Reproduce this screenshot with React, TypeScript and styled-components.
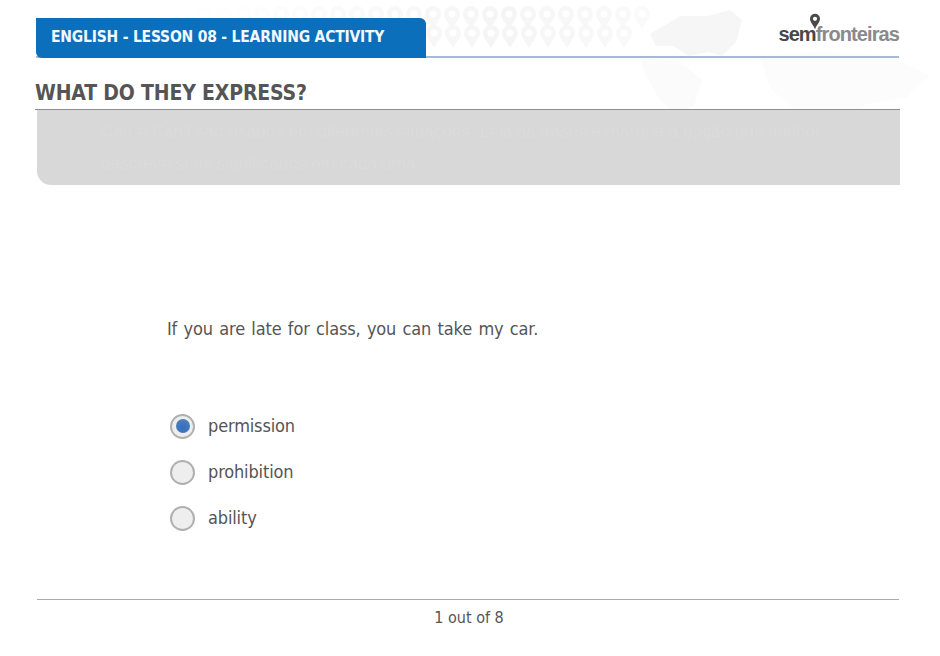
import React from 'react';
import styled, { createGlobalStyle } from 'styled-components';

const OPTIONS = [
  { id: 1, label: 'permission', checked: true },
  { id: 2, label: 'prohibition', checked: false },
  { id: 3, label: 'ability', checked: false },
];

const PIN_ROWS = [
  { y: 6, from: 205, count: 24 },
  { y: 25, from: 434, count: 11 },
];

const App = (): React.JSX.Element => {
  return (
    <Page>
      <GlobalStyle />
      <WorldMap viewBox="0 0 940 320" aria-hidden="true">
        {PIN_ROWS.map((row) =>
          Array.from({ length: row.count }).map((_, i) => {
            const x = row.from + i * 19;
            const fade = Math.max(0.1, 1 - Math.abs(x - 500) / 300);
            return (
              <path
                key={`${row.y}-${i}`}
                transform={`translate(${x} ${row.y})`}
                d="M0 0a8 8 0 0 0-8 8c0 4 4 8 8 15 4-7 8-11 8-15a8 8 0 0 0-8-8zm0 4.5a3.5 3.5 0 1 1 0 7 3.5 3.5 0 0 1 0-7z"
                fill="#f5f5f5"
                fillRule="evenodd"
                opacity={fade}
              />
            );
          }),
        )}
        <path d="M650 34l30-18 28 0 22-6 12 10-6 22-14 14-14-4-20 4-14-10-18 0z" fill="#f6f6f6" />
        <path d="M640 58l40 4 22 18-8 26-18 8-16-14-14-24z" fill="#fbfbfb" />
        <path d="M760 56l60-4 70 4 40 20-24 22-40 6-24 24-42-12-30-28z" fill="#fcfcfc" />
      </WorldMap>

      <Header>
        <LessonTab>ENGLISH - LESSON 08 - LEARNING ACTIVITY</LessonTab>
        <Logo>
          <LogoPin viewBox="0 0 12 17" aria-hidden="true">
            <path
              d="M6 .8a5 5 0 0 0-5 5c0 3.2 3.4 6.6 5 10.4 1.6-3.8 5-7.2 5-10.4a5 5 0 0 0-5-5z"
              fill="#4a4a4a"
            />
            <circle cx="6" cy="5.8" r="2.1" fill="#fff" />
          </LogoPin>
          <LogoStrong>sem</LogoStrong>
          <LogoLight>fronteiras</LogoLight>
        </Logo>
      </Header>

      <Title>WHAT DO THEY EXPRESS?</Title>

      <Instructions>
        <InstructionText>
          Can e Can't são usados em diferentes situações. Leia as frases e marque a opção que melhor
          descreve seus significados em cada uma.
        </InstructionText>
      </Instructions>

      <Question>If you are late for class, you can take my car.</Question>

      <OptionList>
        {OPTIONS.map((option) => (
          <OptionRow key={option.id}>
            <Radio>{option.checked && <RadioDot />}</Radio>
            <OptionLabel>{option.label}</OptionLabel>
          </OptionRow>
        ))}
      </OptionList>

      <Footer>1 out of 8</Footer>
    </Page>
  );
};

const FONT = `Tahoma, "DejaVu Sans Condensed", "DejaVu Sans", sans-serif`;

const GlobalStyle = createGlobalStyle`
  html, body {
    margin: 0;
    padding: 0;
    background: #fff;
  }
`;

const Page = styled.div`
  position: relative;
  width: 940px;
  height: 656px;
  overflow: hidden;
  background: #fff;
  font-family: ${FONT};
  color: #555;
  display: flex;
  flex-direction: column;
`;

const WorldMap = styled.svg`
  position: absolute;
  left: 0;
  top: 0;
  width: 940px;
  height: 320px;
`;

const Header = styled.header`
  position: relative;
  width: 863px;
  height: 40px;
  margin: 18px 0 0 36px;
  display: flex;
  justify-content: space-between;
  align-items: flex-start;
  background: linear-gradient(#a7bad4, #a7bad4) left 38px / 100% 2px no-repeat;
`;

const LessonTab = styled.div`
  width: 375px;
  height: 40px;
  padding-left: 15px;
  background: #0b6fbb;
  border-radius: 0 6px 0 6px;
  color: #f2f8fc;
  font-size: 15.5px;
  font-weight: 700;
  line-height: 38px;
  letter-spacing: -0.2px;
  white-space: nowrap;
`;

const Logo = styled.div`
  position: relative;
  margin-top: 5px;
  height: 24px;
  font-family: 'Liberation Sans', Arial, sans-serif;
  font-size: 20px;
  line-height: 23px;
  letter-spacing: -0.9px;
  white-space: nowrap;
`;

const LogoPin = styled.svg`
  position: absolute;
  left: 31px;
  top: -10px;
  width: 12px;
  height: 17px;
`;

const LogoStrong = styled.span`
  font-weight: 700;
  color: #484848;
`;

const LogoLight = styled.span`
  font-weight: 700;
  color: #8a8a8a;
`;

const Title = styled.h1`
  position: relative;
  margin: 20px 0 0 35px;
  width: 865px;
  height: 32px;
  box-sizing: border-box;
  border-bottom: 1px solid #8f8f8f;
  font-size: 21px;
  font-weight: 700;
  line-height: 30px;
  letter-spacing: -0.17px;
  color: #555;
`;

const Instructions = styled.section`
  position: relative;
  box-sizing: border-box;
  width: 863px;
  height: 75px;
  margin-left: 37px;
  padding: 5px 30px 0 64px;
  background: #d8d8d8;
  border-bottom-left-radius: 14px;
`;

const InstructionText = styled.p`
  margin: 0;
  font-family: 'Liberation Sans', Arial, sans-serif;
  font-size: 17.2px;
  line-height: 32px;
  color: #dbdbdb;
`;

const Question = styled.p`
  position: relative;
  margin: 132px 0 0 167px;
  font-size: 18px;
  line-height: 24px;
  letter-spacing: -0.15px;
  word-spacing: 1.4px;
  color: #555;
`;

const OptionList = styled.div`
  position: relative;
  margin: 72px 0 0 170px;
  display: flex;
  flex-direction: column;
  gap: 20px;
`;

const OptionRow = styled.div`
  display: flex;
  align-items: center;
  gap: 13px;
  height: 26px;
`;

const Radio = styled.span`
  box-sizing: border-box;
  width: 25px;
  height: 25px;
  border: 2px solid #b0b0b0;
  border-radius: 50%;
  background: #eeeeee;
  display: flex;
  align-items: center;
  justify-content: center;
`;

const RadioDot = styled.span`
  width: 14px;
  height: 14px;
  border-radius: 50%;
  background: radial-gradient(circle at 50% 65%, #2f6fc0, #5a82b8);
`;

const OptionLabel = styled.span`
  font-size: 18px;
  line-height: 26px;
  letter-spacing: -0.15px;
  color: #555;
`;

const Footer = styled.footer`
  position: relative;
  box-sizing: border-box;
  width: 862px;
  margin: 68px 0 0 37px;
  padding: 8px 0 0 2px;
  border-top: 1px solid #a9a9a9;
  text-align: center;
  font-size: 16px;
  line-height: 20px;
  letter-spacing: 0;
  color: #555;
`;

export default App;
